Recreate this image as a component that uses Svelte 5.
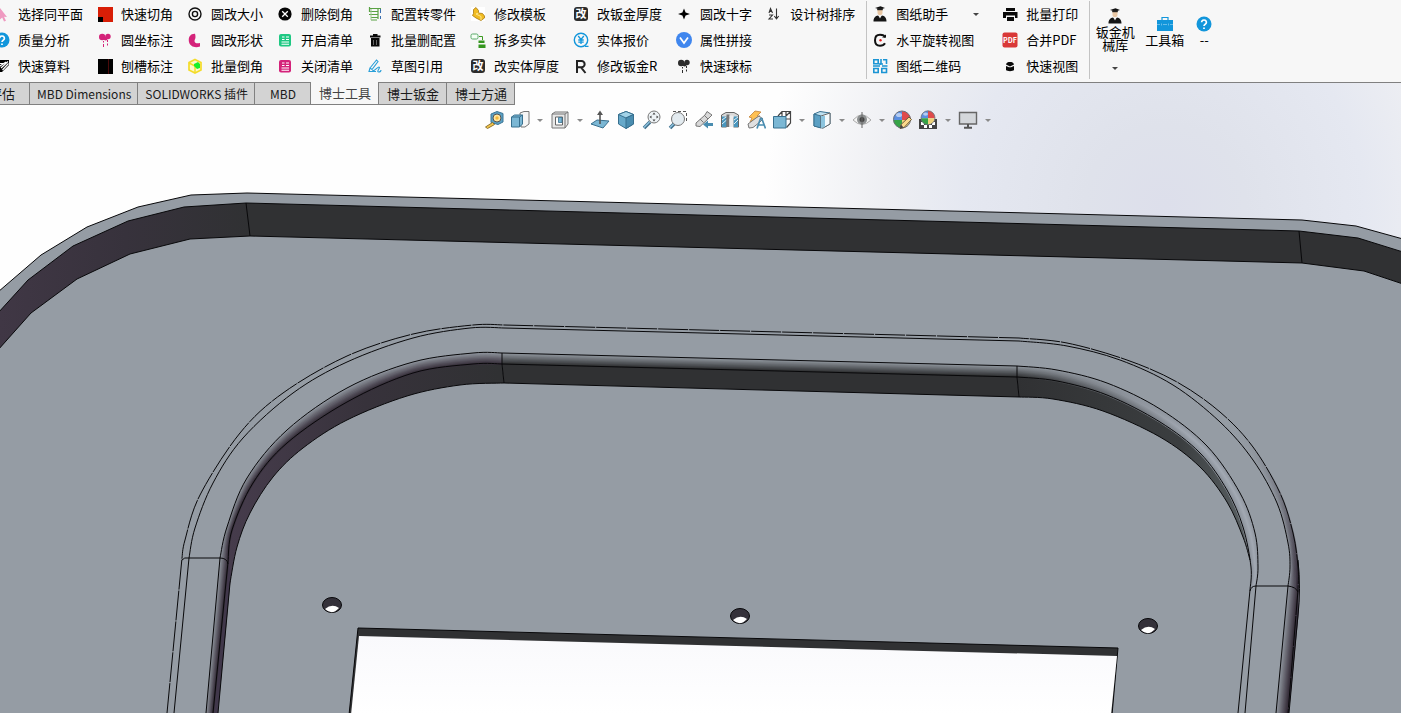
<script>
  let activeTab = $state("博士工具");

  const help =
    '<circle cx="8" cy="8" r="7.5" fill="#1296db"/><path d="M5.6 6.3a2.4 2.3 0 1 1 3.6 2c-.9.6-1.2.8-1.2 1.8M8 11.4v1.7" fill="none" stroke="#fff" stroke-width="1.7"/>';
  const balloons = (c) =>
    `<g fill="${c}"><circle cx="5.2" cy="5" r="3.2"/><circle cx="11" cy="4.500" r="2.7"/><circle cx="8.6" cy="6.500" r="2"/></g><path d="M6.500 9v1.500M6.500 12v3M10.500 8v2M10.500 11.500v2" stroke="${c}" fill="none"/>`;
  const list = (c) =>
    `<rect x="2" y="2" width="12" height="12.500" rx="2" fill="${c}"/><path d="M5 5h2.500M9 5h3M9 7.500h3M5 7.500h2.500M4.500 10h7.500M4.500 12.300h7.500" stroke="#fff" stroke-width="1.1"/>`;
  const gai =
    '<rect x="1" y="1" width="14" height="14" rx="3" fill="#2c2c2c"/><text x="8" y="12" font-size="11" font-weight="700" text-anchor="middle" fill="#fff">改</text>';
  const graduate =
    '<path d="M3 2 8.500 .3l4.500 1.700-4.500 1.500z" fill="#111"/><path d="M5.500 3h5v3.500a2.500 2.700 0 0 1-5 0z" fill="#e9c7a4"/><path d="M5.200 2.200h5.600v2H5.200z" fill="#222"/><path d="M1.500 15.500c0-4 2-5.500 4.500-6l2 2 2-2c2.500.5 4.500 2 4.500 6z" fill="#151515"/><path d="m6.500 9.500 1.500 3 1.500-3z" fill="#eee"/>';

  const icons = {
    cursor: '<path d="m6 2 7 9-3-.3 2 4-2 .8-1.800-4-2.200 2z" fill="#ef9ac1"/>',
    help,
    calc: '<path d="M1 2h14v5l-7 7H1z" fill="#000"/><path d="M2 5.500h8M3 10l9-6M7 10l7-6.500M8.500 12l6-6.500" stroke="#fff" stroke-width="1.200"/>',
    cut: '<path d="M1 1h15v15H1z" fill="#d81e06"/><path d="M1 11h5v5H1z" fill="#000"/>',
    balloonsPink: balloons("#d4237a"),
    slot: '<path d="M1 1h15v15H1z" fill="#000"/><path d="M11.500 1v15" stroke="#4a0a0a"/>',
    ring: '<g fill="none" stroke="#111" stroke-width="1.400"><circle cx="8" cy="8" r="6"/><circle cx="8" cy="8" r="2.600"/></g>',
    crescent: '<path d="M8 1.800C3 1.500 1 6 2 10c1 4.500 6 6.300 11 4.500v-3.500c-3 .8-5.500 0-5.500-2 0-1.500 1-2 1-4 0-1.200-.2-2-.5-3.200z" fill="#d4237a"/>',
    cube: '<path d="m8 1.500 6 3v7.500l-6 3-6-3V4.500z" fill="#fff9c9" stroke="#f4dc2a" stroke-width="1.700"/><path d="m2 5 6 3v7" fill="none" stroke="#f4dc2a" stroke-width="1.500"/><path d="m7 6 4-2 2 2v4l-3 1-3-3z" fill="#1aef2a"/>',
    remove: '<circle cx="8" cy="8" r="6.600" fill="#050505"/><path d="m5.200 5.200 5.600 5.600m0-5.600-5.600 5.600" stroke="#fff" stroke-width="1.300"/>',
    listGreen: list("#1fc883"),
    listPink: list("#d4237a"),
    config: '<path d="M2 2.500h12M2 5.500h9M2 8.500h9M4 11.500h7M2.500 1v5M11 3v10M4 14h6" stroke="#5aa244" stroke-width="1.200" fill="none"/><path d="M4 3v11" stroke="#9cc78e"/><path d="M13.500 3v4M13.500 10v3" stroke="#3b6fb0"/>',
    trash: '<path d="M3 3.500h10.500v2H3zM6 2h4.500v2H6zM4 6h8.500v8.500H4z" fill="#0a0a0a"/><path d="M6.500 8v5M9.500 8v5" stroke="#666"/>',
    sketch: '<g fill="none" stroke="#2a9fd8" stroke-width="1.100"><path d="m3 10 6.500-8 1.500 1.500-6 8zM3 10l-1 3.500h7M5 13c4 0 5-4 7-4s-3 5-.5 5 2.500-1 2.500-2"/></g>',
    part: '<path d="M1 1h14v14H1z" fill="#fff"/><path d="M3.500 3.500 6 1.500l2.500 3V7l4 .5 2 2.500v2L11 14.500 6 12 2.500 9.500l1-2z" fill="#f1bc21" stroke="#a87911" stroke-width=".8"/><path d="m6 8 5 2.500V14M6 8l2.500-1" stroke="#fde58a" fill="none"/>',
    split: '<rect x="1" y="2" width="7" height="5" rx="1.500" fill="#f4fff4" stroke="#59a869"/><path d="M9 4.500h3.500V8" fill="none" stroke="#3b9b20"/><path d="M8.500 8.500h6v2.500h-6zM8.500 12.500h7V16h-7z" fill="#35961f"/>',
    gai,
    yen: '<circle cx="8" cy="8" r="6.700" fill="none" stroke="#1296db" stroke-width="1.400"/><path d="m5.200 4 2.800 3.500L10.800 4M8 7.500V12M5.300 8h5.400M5.300 10.200h5.400M12 14.300h3.500" fill="none" stroke="#1296db" stroke-width="1.300"/>',
    radius: '<path d="M4 15V3h4.500a3 3 0 0 1 0 6.300H4M8 9.300 12.500 15" fill="none" stroke="#222" stroke-width="2"/>',
    star: '<path d="m8 2.500 1.600 3.900 4.400 1.600-4.400 1.600L8 13.500 6.400 9.600 2 8l4.400-1.600z" fill="#000"/>',
    attr: '<circle cx="8" cy="8" r="8" fill="#3f86ee"/><path d="m4 5.500 4 5.500 4-5.500" fill="none" stroke="#fff" stroke-width="1.700"/>',
    balloonsBlack: balloons("#2c2c2c"),
    sort: '<path d="m3 7 1.500-4.500L6.500 7M3.500 5.500h2.500M3 9h3.500L3 13h4M10.500 2.500v10M8.300 10l2.200 2.800L12.700 10" fill="none" stroke="#333" stroke-width="1.100"/>',
    graduate,
    rotate: '<path d="M13 5.500C12.500 3.500 10.500 2.800 8 2.800 4.500 2.800 3 5 3 8.200s1.500 5.500 5 5.500c2.500 0 4-.7 5-2.500" fill="none" stroke="#111" stroke-width="2"/><path d="M10 5.500h4V2.500z" fill="#111"/><circle cx="8.500" cy="8.200" r="1.200" fill="#e02020"/>',
    qr: '<g fill="none" stroke="#1b95d4" stroke-width="1.600"><path d="M1.800 1.800h4.400v4H1.800zM9 1v5h2M14.500 1v5M11 1.800h3.500M1 8h7M8 7V5M10 8h5.500M1.800 10.500h4.400v4H1.800zM9.800 10.500h4.700v4H9.800z"/></g>',
    printer: '<path d="M4 2h9v3H4zM1 6h14.500v6H13V9.500H4V12H1zM5 11h7v4H5z" fill="#0a0a0a"/>',
    pdf: '<rect x=".5" y=".5" width="15" height="15" rx="2" fill="#d93838"/><text x="8" y="11" font-size="7" font-weight="700" text-anchor="middle" fill="#fff">PDF</text>',
    viewbox: '<path d="M4 6.500C4.500 4.500 6 4 8 4s3.500.5 4 2.500L8 8.500zM4 8l3 1.200h2L12 8v4c-1 1.500-7 1.500-8 0z" fill="#0a0a0a"/>',
    toolbox: '<path d="M5 4V1.500h6V4" fill="none" stroke="#1296db" stroke-width="1.200"/><path d="M0 4h16v11H0z" fill="#1296db"/><path d="M0 8.500h3M6 8.500h4M13 8.500h3M4.500 7.500v2M11.500 7.500v2" stroke="#7cc6ec" stroke-width=".8"/>',
  };

  // command groups, one array per column of the ribbon
  const modelColumns = [
    [["cursor", "选择同平面"], ["help", "质量分析"], ["calc", "快速算料"]],
    [["cut", "快速切角"], ["balloonsPink", "圆坐标注"], ["slot", "刨槽标注"]],
    [["ring", "圆改大小"], ["crescent", "圆改形状"], ["cube", "批量倒角"]],
    [["remove", "删除倒角"], ["listGreen", "开启清单"], ["listPink", "关闭清单"]],
    [["config", "配置转零件"], ["trash", "批量删配置"], ["sketch", "草图引用"]],
    [["part", "修改模板"], ["split", "拆多实体"], ["gai", "改实体厚度"]],
    [["gai", "改钣金厚度"], ["yen", "实体报价"], ["radius", "修改钣金R"]],
    [["star", "圆改十字"], ["attr", "属性拼接"], ["balloonsBlack", "快速球标"]],
    [["sort", "设计树排序"]],
  ];
  const drawingColumns = [
    [["graduate", "图纸助手", true], ["rotate", "水平旋转视图"], ["qr", "图纸二维码"]],
    [["printer", "批量打印"], ["pdf", "合并PDF"], ["viewbox", "快速视图"]],
  ];

  const tabs = ["评估", "MBD Dimensions", "SOLIDWORKS 插件", "MBD", "博士工具", "博士钣金", "博士方通"];

  const lens = '<path d="m2 18 6-6" stroke="#3f6f8c" stroke-width="3.500"/><path d="m2 17.500 5.500-5.500" stroke="#8fc3de" stroke-width="1.500"/>';
  const ball =
    '<path d="M10 10V1a9 9 0 0 0-8.700 9z" fill="#5b8fe0"/><path d="M10 10V1a8.500 8.500 0 0 1 8.500 9z" fill="#df4b4b"/><path d="M1.300 10H10v8a8.500 8.500 0 0 1-8.700-8z" fill="#36a346"/><path d="M18.500 10H10v8a8.500 8.500 0 0 0 8.500-8z" fill="#eed27c"/><circle cx="10" cy="9.500" r="8.500" fill="none" stroke="#6b6f78"/><ellipse cx="7" cy="5" rx="3" ry="2" fill="#fff" opacity=".55"/>';

  // heads-up view toolbar; "arrow" entries are the drop-down markers
  const viewTools = [
    ["Measure", '<path d="M7 4 13 1.500l6 2V12l-5 2.500-7-2z" fill="#5ba0c4" stroke="#3d7696"/><circle cx="13" cy="8" r="4" fill="#ffe7a0" stroke="#555"/><circle cx="13" cy="8" r="1.700" fill="#f5b93e"/><path d="m1.500 17 7-4.500 2 2-7 4z" fill="#f5c64b" stroke="#8f7430"/>'],
    ["Section", '<path d="m10 3 4-1.500h5V14l-4 3h-4z" fill="#f5f5f5" stroke="#777"/><path d="m1.500 7 3-2h8v9l-3 3h-8z" fill="#7bb7d4" stroke="#38708f"/><path d="M1.500 7h8v10M9.500 7l3-2" fill="none" stroke="#38708f"/>'],
    ["arrow"],
    ["Window", '<path d="m2 4 3-2h13v12l-3 4H2z" fill="#e8e8e8" stroke="#777"/><path d="M2 4h13v14M15 4l3-2" fill="none" stroke="#777"/><path d="M5.500 7h7v8h-7z" fill="#fff" stroke="#666"/><path d="M8.500 7.500h3.500v5H8.500z" fill="#7bb7d4" stroke="#38708f" stroke-width=".8"/>'],
    ["arrow"],
    ["Normal to", '<path d="m1 14 6-4 12 1-6 7z" fill="#7bb7d4" stroke="#38708f"/><path d="M10 14V3" stroke="#555" stroke-width="1.600"/><path d="m7 5 3-4.500L13 5z" fill="#555"/>'],
    ["Isometric", '<path d="m10 1.500 7.500 3v9.500L10 18.500 2.500 14V4.500z" fill="#67a9ca" stroke="#38708f"/><path d="m10 1.500 7.500 3L10 8 2.500 4.500z" fill="#a3d3e8" stroke="#38708f"/><path d="m10 8 7.500-3.500V14L10 18.500z" fill="#4a8db0" stroke="#38708f"/>'],
    ["Zoom to fit", lens + '<circle cx="12" cy="7" r="6" fill="#eef3f6" stroke="#777"/><path d="m12 2.500 1.500 2h-3zM12 11.500l1.500-2h-3zM7.500 7l2-1.500v3zM16.500 7l-2-1.500v3z" fill="#444"/>'],
    ["Zoom to area", lens + '<path d="M5 1.500h13.500V13" fill="none" stroke="#555" stroke-dasharray="3 2"/><circle cx="10" cy="9" r="6.500" fill="#e3ebf0" stroke="#777"/>'],
    ["Previous view", '<path d="m2 13 9-8 2-3.500 5 3.500-3 3-9 8.500-4-.5z" fill="#d9d9d9" stroke="#777"/><path d="m10 5 4 4M6 9l3.500 3.500" stroke="#777"/><path d="m9 14.500 5-4v2.500h5v3h-5v2.500z" fill="#4a8db0"/>'],
    ["Section view", '<path d="M1.500 5 6 2.500h8L18.500 5v12h-5V8h-7v9h-5z" fill="#d9d9d9" stroke="#666"/><path d="M2 6.500h4.500V17H2zM13.500 6.500H18V17h-4.500z" fill="#4a96bd"/><path d="m2 10 4-3M2 14l4.500-4M14 10l4-3M14 14l4-4" stroke="#e1f1f8"/><path d="M6.500 4.500h3V17h-3z" fill="#777"/><path d="M9.500 5.500h4V17h-4z" fill="#ececec"/>'],
    ["Dynamic annotation", '<path d="m3 7 6-6 6 1-4 4h3L4 12l2-4z" fill="#ffc052" stroke="#c18239" stroke-width=".8"/><path d="m2 14 8-6 3-2 4 3-3 3-7 5.500-4 .5z" fill="#e0e0e0" stroke="#777"/><path d="m11 18.500 3.500-10h1.300l3.700 10M12.500 15h5.500" fill="none" stroke="#4a8db0" stroke-width="1.700"/>'],
    ["View orientation", '<path d="m6 6 4-4.500h8.500V13l-4 4.500M14 6l4.500-4.500M10 1.500V6M14 9h4.500M14 2v4" fill="none" stroke="#444" stroke-width="1.200"/><path d="M1.500 6.500H14V18H1.500z" fill="#7bb7d4" stroke="#38708f"/>'],
    ["arrow"],
    ["Display style", '<path d="m2 4 6-2.500 10 1.500v11l-7 4-9-2z" fill="#bfe0ef" stroke="#38708f"/><path d="m2 4 7 2v12l-7-2z" fill="#5ba0c4" stroke="#38708f"/><path d="m9 6 9-3v11l-7 4-2-.3z" fill="#f4fafc" stroke="#666"/><path d="M9 6h4v11l-4 1z" fill="#8cc4de"/>'],
    ["arrow"],
    ["Hide items", '<path d="M1 10q9-10 18 0-9 9-18 0z" fill="#f4f4f4" stroke="#aaa"/><circle cx="10" cy="9.500" r="5" fill="#8d9091"/><circle cx="10" cy="9.500" r="2.500" fill="#444"/><path d="M10 2v16" stroke="#666"/>'],
    ["arrow"],
    ["Edit appearance", ball + '<path d="m8 18.500 1-4 8-7.500 2.500 2.500-7.500 8z" fill="#fbd98a" stroke="#6b5a3c"/><path d="m8 18.500 1-4 2.500 3z" fill="#444"/>'],
    ["Apply scene", '<path d="M1 9h18v10H1z" fill="#444"/><path d="M3 12h3v3H3zM14 12h3v3h-3zM6 15h3v3H6zM11 15h3v3h-3z" fill="#fff"/><g transform="translate(1.800 0) scale(.82)">' + ball + "</g>"],
    ["arrow"],
    ["View settings", '<path d="M1.500 2.500h17v11.500h-17z" fill="#d4d7db" stroke="#666" stroke-width="1.400"/><path d="M10 14v3.500M6 17.700h8" stroke="#555" stroke-width="2"/>'],
    ["arrow"],
  ];

  /* Edge loops of the recess, listed clockwise: foot, left corner, right corner, foot */
  const outerEdge = {
    l: [[182, 558], [185, 540], [200, 495], [240, 433], [283, 393], [347, 356], [413, 334], [473, 325], [504, 325]],
    r: [[1019, 338], [1067, 343], [1127, 360], [1177, 382], [1220, 412], [1253, 447], [1280, 493], [1293, 533], [1298, 567], [1298, 590]],
    feet: [[167, 713], [1288, 713]],
  };
  const outerFillet = {
    l: [[189, 558], [195, 528], [213, 483], [243, 438], [293, 393], [347, 362], [413, 338], [470, 328], [504, 328]],
    r: [[1019, 341], [1067, 346], [1120, 360], [1173, 385], [1220, 422], [1253, 460], [1277, 503], [1288, 543], [1290, 567], [1288, 586]],
    feet: [[174, 713], [1276, 713]],
  };
  const innerFillet = {
    l: [[220, 558], [227, 527], [247, 478], [287, 430], [347, 388], [413, 362], [473, 353], [502, 353]],
    r: [[1017, 366], [1057, 370], [1107, 383], [1160, 409], [1207, 446], [1240, 493], [1255, 533], [1258, 567], [1256, 586]],
    feet: [[206, 713], [1245, 713]],
  };
  const innerEdge = {
    l: [[228, 562], [232, 530], [253, 483], [287, 443], [347, 402], [413, 373], [473, 364], [502, 364]],
    r: [[1017, 377], [1057, 381], [1107, 395], [1160, 422], [1200, 453], [1227, 490], [1243, 527], [1251, 567], [1250, 590]],
    feet: [[213, 713], [1238, 713]],
  };
  const floorEdge = {
    l: [[230, 583], [237, 547], [250, 513], [273, 477], [303, 448], [347, 420], [407, 396], [460, 385], [504, 383]],
    r: [[1019, 397], [1053, 399], [1103, 411], [1160, 437], [1200, 467], [1227, 502], [1243, 537], [1250, 560]],
  };

  // Catmull-Rom spline through the points, as bezier segments
  function curve(pts) {
    let d = "";
    for (let i = 0; i < pts.length - 1; i++) {
      const p0 = pts[i - 1] || pts[i];
      const p1 = pts[i];
      const p2 = pts[i + 1];
      const p3 = pts[i + 2] || p2;
      d += `C${p1[0] + (p2[0] - p0[0]) / 6} ${p1[1] + (p2[1] - p0[1]) / 6} ${p2[0] - (p3[0] - p1[0]) / 6} ${p2[1] - (p3[1] - p1[1]) / 6} ${p2[0]} ${p2[1]}`;
    }
    return d;
  }
  const arc = (pts) => `M${pts[0]}` + curve(pts);
  const loop = (e) => `M${e.feet[0]}L${e.l[0]}${curve(e.l)}L${e.r[0]}${curve(e.r)}L${e.feet[1]}`;
  const wall = (a, b) => {
    const back = [...b].reverse();
    return `${arc(a)}L${back[0]}${curve(back)}Z`;
  };
  const mix = (a, b, t) => a.map((p, i) => [p[0] + (b[i][0] - p[0]) * t, p[1] + (b[i][1] - p[1]) * t]);
  const shade = (from, to, t) => `rgb(${from.map((c, i) => Math.round(c + (to[i] - c) * t))})`;

  const plate = [149, 156, 164];
  const steps = [0.1, 0.2, 0.3, 0.4, 0.5, 0.6, 0.7, 0.8, 0.9, 1].map((t) => ({
    t,
    left: shade(plate, [56, 48, 60], t),
    top: shade(plate, [48, 49, 51], t),
    bright: shade([140, 146, 155], [162, 169, 179], 1 - Math.abs(t - 0.5) * 2),
    corner: arc(mix(innerFillet.l, innerEdge.l, t)),
    straight: `M${mix([innerFillet.l[7]], [innerEdge.l[7]], t)[0]}L${mix([innerFillet.r[0]], [innerEdge.r[0]], t)[0]}`,
    right: arc(mix(innerFillet.r, innerEdge.r, t)),
    leftFoot: `M${mix([[220, 558]], [[228, 562]], t)[0]}L${mix([[206, 713]], [[213, 713]], t)[0]}`,
    rim: arc(mix(outerFillet.r.slice(4), outerEdge.r.slice(4), t)),
    rimFoot: `M${mix([[1288, 586]], [[1298, 590]], t)[0]}L${mix([[1276, 713]], [[1287, 713]], t)[0]}`,
  }));

  const holes = [[332, 605], [740, 616], [1148, 626]];

  const isLatin = (text) => /[A-Z]/.test(text);
</script>

{#snippet command([icon, label, menu])}
  <button class="command">
    <svg class="icon" viewBox="0 0 16 16" aria-hidden="true">{@html icons[icon]}</svg>
    <span>{label}</span>
    {#if menu}<i class="arrow"></i>{/if}
  </button>
{/snippet}

<div class="window">
  <header class="ribbon">
    <div class="group model">
      {#each modelColumns as column}
        <div class="column">
          {#each column as item}{@render command(item)}{/each}
        </div>
      {/each}
    </div>
    <div class="group drawing">
      {#each drawingColumns as column}
        <div class="column">
          {#each column as item}{@render command(item)}{/each}
        </div>
      {/each}
    </div>
    <div class="group library">
      <button class="large first">
        <svg class="icon" viewBox="0 0 16 16" aria-hidden="true">{@html icons.graduate}</svg>
        <span>钣金机械库</span>
        <i class="arrow"></i>
      </button>
      <button class="large">
        <svg class="icon" viewBox="0 0 16 16" aria-hidden="true">{@html icons.toolbox}</svg>
        <span>工具箱</span>
      </button>
      <button class="large">
        <svg class="icon" viewBox="0 0 16 16" aria-hidden="true">{@html icons.help}</svg>
        <span>--</span>
      </button>
    </div>
  </header>

  <main>
    <svg class="scene" viewBox="0 83 1401 630" preserveAspectRatio="xMidYMin slice" aria-hidden="true">
      <defs>
        <radialGradient id="sky" gradientUnits="userSpaceOnUse" cx="1165" cy="205" r="400">
          <stop offset="0" stop-color="#dddfeb" />
          <stop offset=".2" stop-color="#dfe2eb" />
          <stop offset=".5" stop-color="#e5e8f1" />
          <stop offset=".7" stop-color="#eeeff3" />
          <stop offset="1" stop-color="#fefefe" />
        </radialGradient>
        <linearGradient id="rimWall" gradientUnits="userSpaceOnUse" x1="0" x2="250" y1="0" y2="0">
          <stop offset="0" stop-color="#403745" />
          <stop offset=".5" stop-color="#37323c" />
          <stop offset="1" stop-color="#303133" />
        </linearGradient>
        <linearGradient id="leftWall" gradientUnits="userSpaceOnUse" x1="230" x2="500" y1="0" y2="0">
          <stop offset="0" stop-color="#463c4c" />
          <stop offset=".5" stop-color="#37323b" />
          <stop offset="1" stop-color="#303133" />
        </linearGradient>
        <linearGradient id="rightWall" gradientUnits="userSpaceOnUse" x1="1017" x2="1250" y1="0" y2="0">
          <stop offset="0" stop-color="#303133" />
          <stop offset=".7" stop-color="#3b3e40" />
          <stop offset="1" stop-color="#5b6265" />
        </linearGradient>
        <linearGradient id="rimFade" gradientUnits="userSpaceOnUse" x1="0" x2="0" y1="420" y2="570">
          <stop offset="0" stop-color="#959ca4" stop-opacity="0" />
          <stop offset="1" stop-color="#3a3340" />
        </linearGradient>
        <linearGradient id="opening" x1="0" x2="0" y1="0" y2="1">
          <stop offset="0" stop-color="#f9f9fc" />
          <stop offset="1" stop-color="#fff" />
        </linearGradient>
        {#each steps as s, i}
          <linearGradient id="bend{i}" gradientUnits="userSpaceOnUse" x1="1017" x2="1190" y1="0" y2="0">
            <stop offset="0" stop-color={s.top} />
            <stop offset="1" stop-color={s.bright} />
          </linearGradient>
        {/each}
      </defs>

      <rect x="0" y="83" width="1401" height="630" fill="url(#sky)" />

      <!-- plate and its outer wall -->
      <path class="face edge" d="M-2 292 41 255 87 227 138 207 191 195 247 193 1302 220 1356 226 1403 239V715H-2Z" />
      <path
        class="edge"
        fill="url(#rimWall)"
        d="M-2 313 28 280 73 246 128 221 184 207 246 203 1299 231 1358 238 1403 252V284L1364 271 1302 263 250 236 190 239 130 254 77 279 31 313-2 350Z"
      />
      <path class="edge line" d="M246 203 250 236M1299 231 1302 263" />

      <!-- recess walls -->
      <path fill="url(#leftWall)" d={wall(innerEdge.l, floorEdge.l)} />
      <path fill="#303133" d="M502 364 1017 377 1019 397 504 383Z" />
      <path fill="url(#rightWall)" d={wall(innerEdge.r.slice(0, 8), floorEdge.r)} />
      <path fill="#40374a" d="M228 562 231 575 218 713H213Z" />
      <path fill="#3a3340" d="M1297 560 1299 610 1289 713H1285L1296 590Z" />

      <g class="shading">
        {#each steps as s, i}
          <path d={s.corner} stroke={s.left} />
          <path d={s.straight} stroke={s.top} />
          <path d={s.right} stroke="url(#bend{i})" />
          <path d={s.leftFoot} stroke={s.left} />
          <path d={s.rim} stroke="url(#rimFade)" opacity={s.t * 0.8} />
          <path d={s.rimFoot} stroke={s.left} />
        {/each}
      </g>

      <g class="edge line">
        <path class="thin" d={loop(outerEdge)} />
        <path d={loop(outerFillet)} />
        <path d={loop(innerFillet)} />
        <path d={loop(innerEdge)} />
        <path d="M218 713 {floorEdge.l[0]}{curve(floorEdge.l)}L1019 397{curve(floorEdge.r)}" />
        <path d="M1298 560Q1301 590 1298 615L1289 713" />
        <path d="M182 560Q184 557 189 558L220 558Q227 558 228 564M1250 591Q1251 586 1256 586L1288 586Q1296 587 1298 592" />
        <path d="M502 353V364L504 383M1017 366V377L1019 397" />
      </g>

      <!-- screw holes -->
      {#each holes as [x, y]}
        <ellipse class="edge" cx={x} cy={y} rx="9.5" ry="7.5" fill="#34313a" />
        <path d="M{x - 7} {y + 4}Q{x} {y - 2} {x + 7} {y + 3}Q{x} {y + 11} {x - 7} {y + 4}Z" fill="#fff" />
      {/each}

      <!-- rectangular opening -->
      <path class="edge" fill="#303133" d="M358 628 1118 648 1112 715H349Z" />
      <path fill="url(#opening)" d="M359 636 1117 656 1111 715H351Z" />
    </svg>

    <nav class="tabs">
      {#each tabs as tab}
        <button class:latin={isLatin(tab)} class:active={tab === activeTab} onclick={() => (activeTab = tab)}>{tab}</button>
      {/each}
    </nav>

    <div class="viewbar">
      {#each viewTools as [name, art]}
        {#if name === "arrow"}
          <button class="drop" aria-label="More"><i class="arrow"></i></button>
        {:else}
          <button aria-label={name}>
            <svg viewBox="0 0 20 20" aria-hidden="true">{@html art}</svg>
          </button>
        {/if}
      {/each}
    </div>
  </main>
</div>

<style>
  :global(body) {
    margin: 0;
    overflow: hidden;
  }
  .window {
    display: flex;
    flex-direction: column;
    height: 100vh;
    overflow: hidden;
    font-family: "Noto Sans CJK SC", sans-serif;
    font-size: 13px;
    color: #000;
  }
  button {
    margin: 0;
    padding: 0;
    border: 0;
    background: none;
    font: inherit;
    color: inherit;
    white-space: nowrap;
  }
  svg {
    display: block;
    flex: none;
  }

  /* ribbon */
  .ribbon {
    display: flex;
    flex: none;
    padding: 1px 0 3px;
    background: #f7f7f7;
    border-bottom: 1px solid #808080;
  }
  .group {
    display: flex;
    gap: 14px;
  }
  .group + .group {
    border-left: 1px solid #c3c3c3;
  }
  .model {
    margin-left: -6px;
    padding-right: 11px;
  }
  .drawing {
    gap: 23px;
    padding: 0 11px 0 5px;
  }
  .library {
    gap: 10px;
    padding-left: 5px;
  }
  .column {
    display: flex;
    flex-direction: column;
  }
  .command {
    display: flex;
    align-items: center;
    gap: 8px;
    height: 26px;
    line-height: 26px;
  }
  .command .arrow {
    margin-left: 17px;
  }
  .icon {
    width: 16px;
    height: 16px;
  }
  .arrow {
    width: 0;
    border: 3px solid transparent;
    border-top-color: #444;
    border-bottom: 0;
  }
  .large {
    display: flex;
    flex-direction: column;
    align-items: center;
    gap: 1px;
    min-width: 20px;
    padding-top: 15px;
    line-height: 13px;
  }
  .large span {
    max-width: 40px;
    white-space: normal;
  }
  .large.first {
    padding-top: 7px;
  }
  .first .arrow {
    margin-top: 15px;
  }

  /* graphics area */
  main {
    position: relative;
    flex: 1;
    min-height: 0;
  }
  .scene {
    position: absolute;
    inset: 0;
    width: 100%;
    height: 100%;
  }
  .face {
    fill: #959ca4;
  }
  .edge {
    stroke: #08080a;
    stroke-width: 1;
  }
  .line {
    fill: none;
  }
  .thin {
    stroke-dasharray: 30 1;
  }
  .shading {
    fill: none;
    stroke-width: 2;
  }

  .tabs {
    position: relative;
    display: flex;
    margin-left: -26px;
  }
  .tabs button {
    min-width: 56px;
    height: 22px;
    padding: 0 7px 0 8px;
    line-height: 20px;
    background: #d3d3d3;
    border-right: 1px solid #808080;
    border-bottom: 1px solid #808080;
    color: #1a1a1a;
  }
  .tabs .latin {
    padding: 0 6px 0 7px;
    font-size: 12px;
  }
  .tabs .active {
    height: 23px;
    margin-top: -1px;
    background: #f7f7f7;
    color: #444;
  }

  .viewbar {
    position: relative;
    display: flex;
    justify-content: center;
    gap: 6px;
    padding: 5px 0 0 75px;
  }
  .viewbar svg {
    width: 20px;
    height: 20px;
  }
  .drop {
    display: flex;
    align-items: center;
    justify-content: center;
    width: 8px;
  }
  .drop .arrow {
    border-top-color: #8a8a8a;
  }
</style>
